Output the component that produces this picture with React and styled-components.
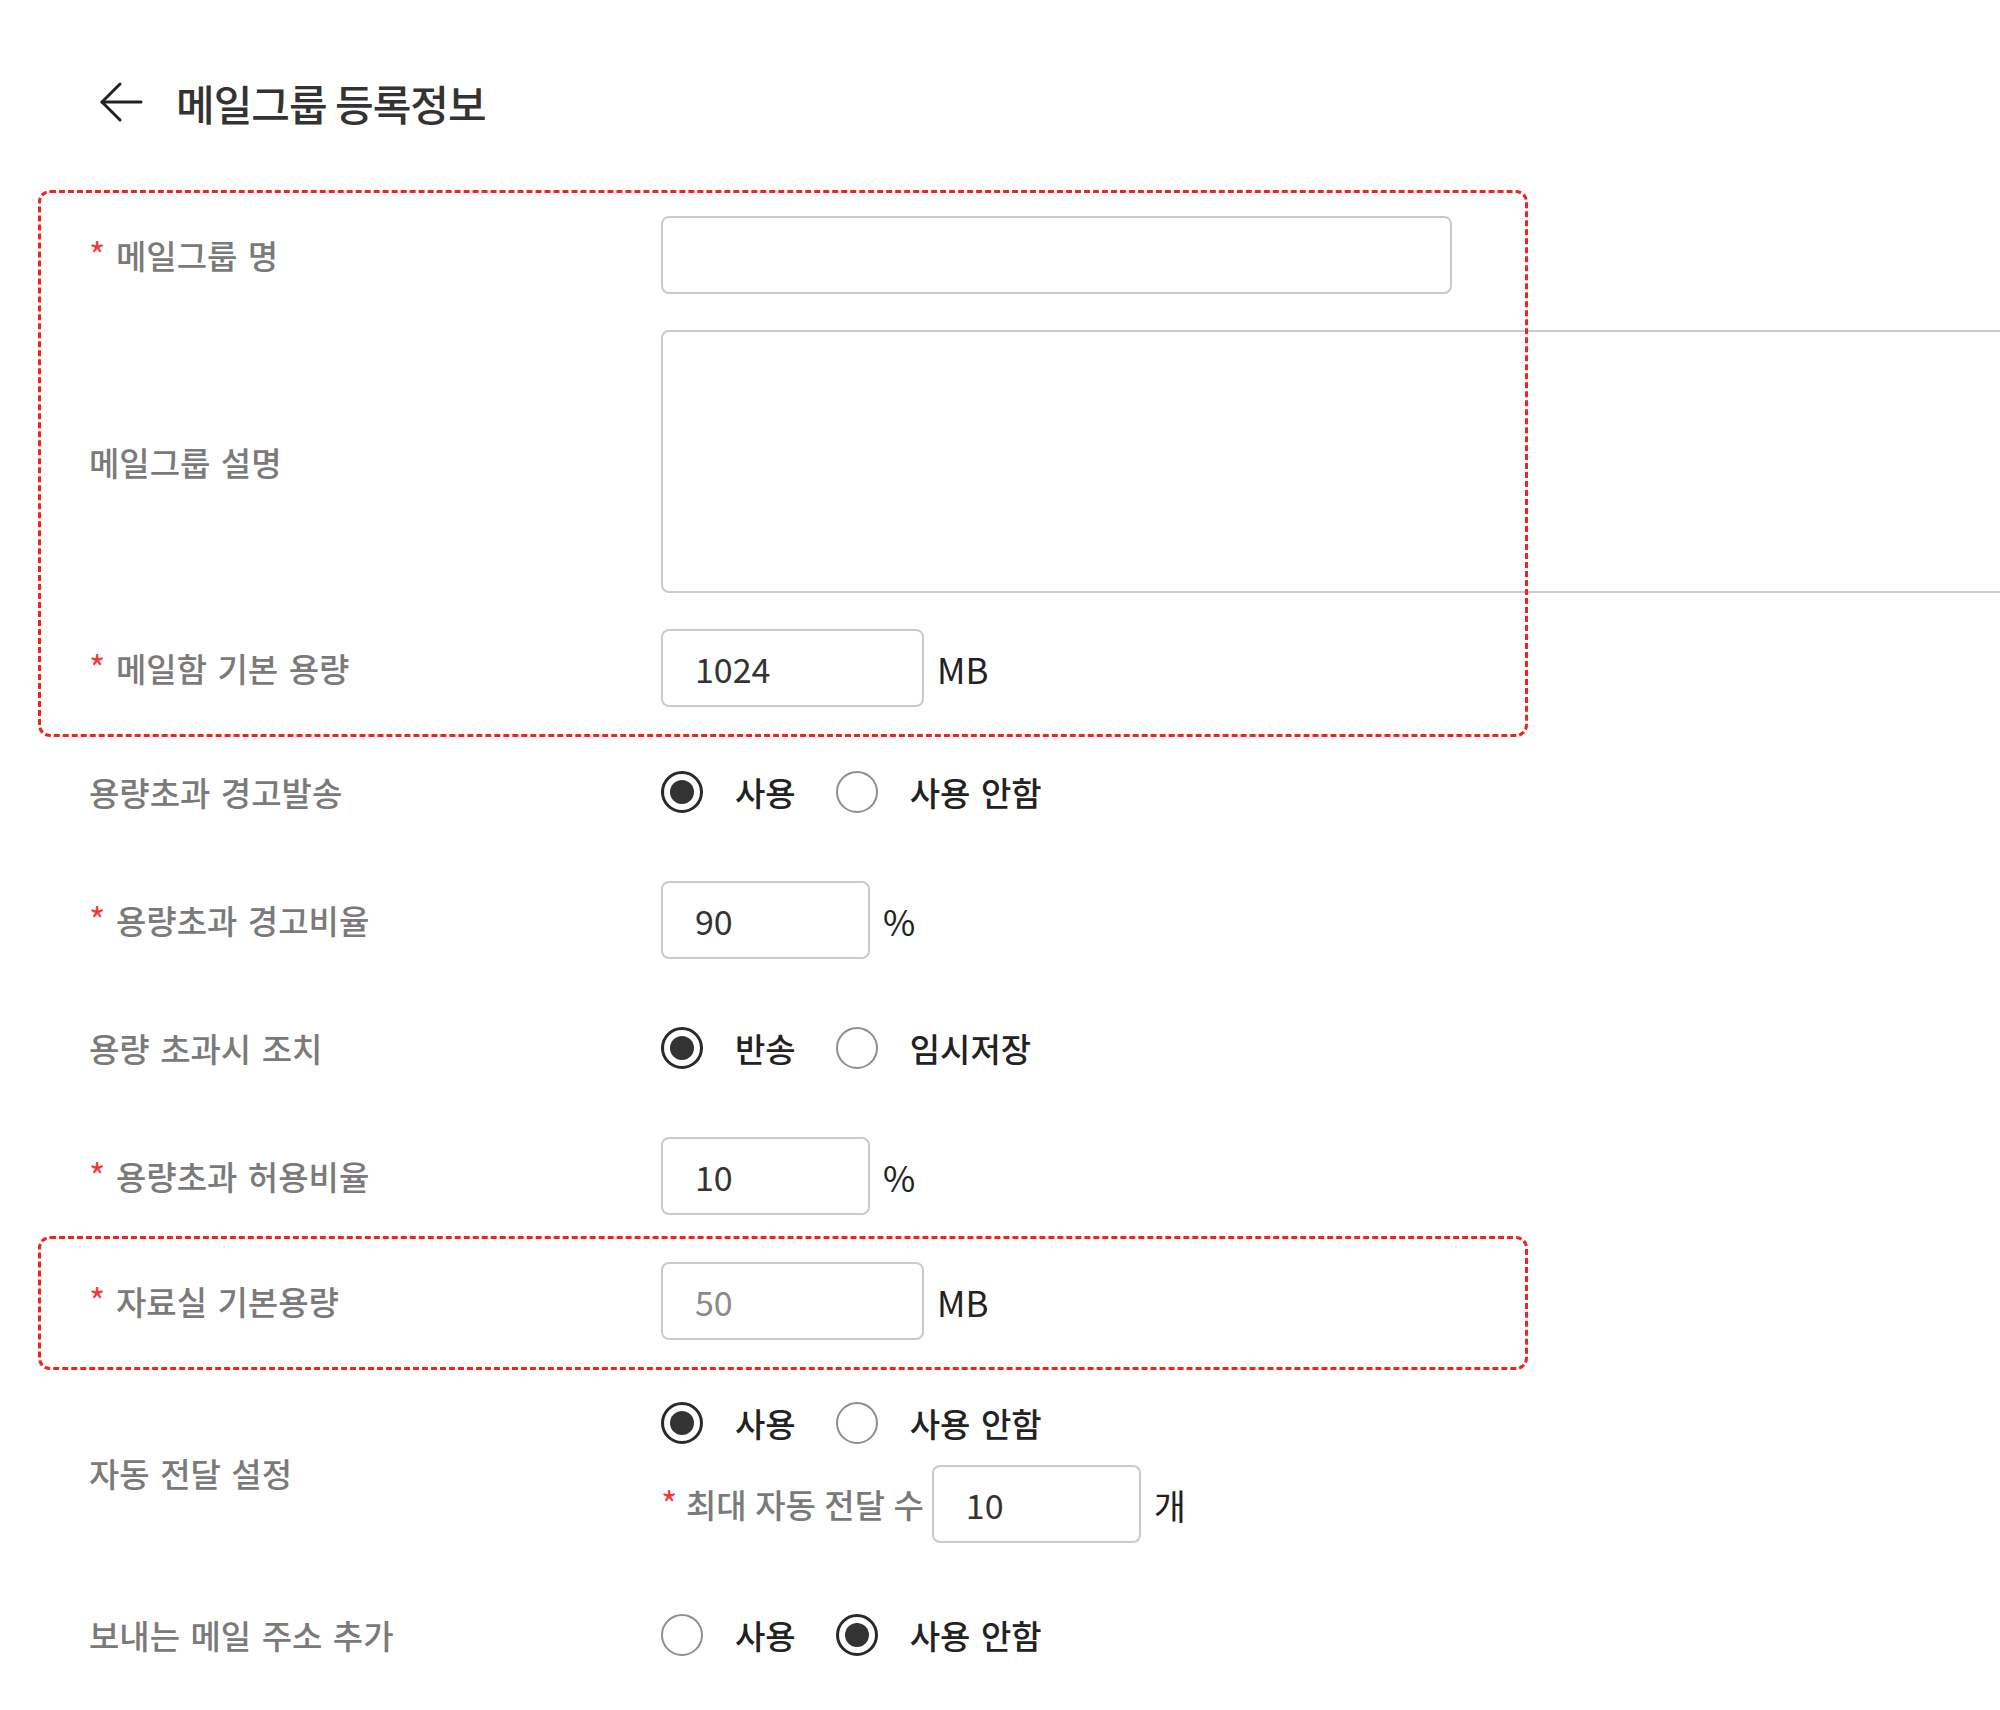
import React from 'react';
import styled, { createGlobalStyle } from 'styled-components';

const GlobalStyle = createGlobalStyle`
  * {
    box-sizing: border-box;
  }
  html,
  body {
    margin: 0;
    padding: 0;
    background: #fff;
    overflow: hidden;
  }
  body {
    font-family: 'Noto Sans CJK KR', 'Noto Sans', sans-serif;
    color: #222;
  }
`;

const Page = styled.div`
  width: 2000px;
  min-height: 1710px;
  padding: 64px 0 0 41px;
`;

const Header = styled.header`
  display: flex;
  align-items: center;
  height: 76px;
  padding-left: 58px;
  gap: 33px;
`;

const BackButton = styled.button`
  display: flex;
  padding: 0;
  border: 0;
  background: none;
  color: #222;
  cursor: pointer;
`;

const Title = styled.h1`
  margin: 0;
  font-size: 42px;
  font-weight: 500;
  letter-spacing: -1px;
  color: #333;
`;

const Form = styled.form`
  display: flex;
  flex-direction: column;
  width: 1487px;
`;

/* red dashed frame drawn over a group of rows */
const Highlight = styled.div`
  position: relative;
  display: flex;
  flex-direction: column;
  gap: 36px;
  width: 1490px;
  margin: ${p => p.$top}px 0 0 -3px;
  padding: 26px 0 30px 3px;

  &::after {
    content: '';
    position: absolute;
    inset: 0;
    border: 3px dashed #f2231f;
    border-radius: 12px;
    pointer-events: none;
  }
`;

const Row = styled.div`
  display: grid;
  grid-template-columns: 572px 1fr;
  align-items: center;
  min-height: 78px;
  padding-left: 48px;
  margin-top: ${p => p.$top || 0}px;
`;

const Label = styled.div`
  font-size: 33px;
  font-weight: 500;
  line-height: 40px;
  word-spacing: 3px;
  color: #7a7a7a;
  white-space: nowrap;
`;

const Star = styled.span`
  display: inline-block;
  width: 27px;
  font-size: 35px;
  font-weight: 400;
  line-height: 38px;
  vertical-align: top;
  color: #f03c3c;
`;

const Field = styled.div`
  display: flex;
  align-items: center;
`;

const TextInput = styled.input`
  width: ${p => p.$w}px;
  height: 78px;
  padding: 0 0 0 32px;
  border: 2px solid #cacaca;
  border-radius: 8px;
  background: #fff;
  font-family: inherit;
  font-size: 34px;
  color: ${p => (p.$muted ? '#8a8a8a' : '#333')};
  outline: none;
`;

const TextArea = styled.textarea`
  display: block;
  width: 1400px;
  height: 263px;
  border: 2px solid #cacaca;
  border-radius: 8px;
  background: transparent;
  resize: none;
  outline: none;
`;

const Unit = styled.span`
  margin-left: 13px;
  font-size: 35px;
  color: #222;
`;

const Options = styled.div`
  display: flex;
  align-items: center;
  gap: 40px;
`;

const Option = styled.label`
  display: flex;
  align-items: center;
  gap: 32px;
  font-size: 33px;
  font-weight: 500;
  line-height: 40px;
  word-spacing: 3px;
  color: #222;
  cursor: pointer;
`;

const Circle = styled.span`
  display: flex;
  align-items: center;
  justify-content: center;
  width: 42px;
  height: 42px;
  border-radius: 50%;
  border: ${p => (p.$on ? '3px solid #2a2a2a' : '2px solid #8e8e8e')};

  &::after {
    content: '';
    display: ${p => (p.$on ? 'block' : 'none')};
    width: 24px;
    height: 24px;
    border-radius: 50%;
    background: #333;
  }
`;

const Stack = styled.div`
  display: flex;
  flex-direction: column;
  align-items: flex-start;
  gap: 21px;
`;

const SubLabel = styled(Label)`
  margin-right: 8px;
  word-spacing: 1px;

  ${Star} {
    width: 25px;
  }
`;

const ArrowLeft = () => (
  <svg width="44" height="40" viewBox="0 0 44 40" fill="none" stroke="currentColor" strokeWidth="3" strokeLinecap="round" strokeLinejoin="round">
    <path d="M42 20H3" />
    <path d="M21 2L3 20l18 18" />
  </svg>
);

const RadioGroup = ({ items, value }) => (
  <Options>
    {items.map(item => (
      <Option key={item}>
        <Circle $on={item === value} />
        {item}
      </Option>
    ))}
  </Options>
);

const FieldLabel = ({ required, children }) => (
  <Label>
    {required && <Star>*</Star>}
    {children}
  </Label>
);

const useOptions = ['사용', '사용 안함'];

const App = () => {
  return (
    <Page>
      <GlobalStyle />
      <Header>
        <BackButton type="button" aria-label="뒤로">
          <ArrowLeft />
        </BackButton>
        <Title>메일그룹 등록정보</Title>
      </Header>

      <Form onSubmit={e => e.preventDefault()}>
        <Highlight $top={50}>
          <Row>
            <FieldLabel required>메일그룹 명</FieldLabel>
            <TextInput $w={791} />
          </Row>
          <Row>
            <FieldLabel>메일그룹 설명</FieldLabel>
            <TextArea />
          </Row>
          <Row>
            <FieldLabel required>메일함 기본 용량</FieldLabel>
            <Field>
              <TextInput $w={263} defaultValue="1024" />
              <Unit>MB</Unit>
            </Field>
          </Row>
        </Highlight>

        <Row $top={16}>
          <FieldLabel>용량초과 경고발송</FieldLabel>
          <RadioGroup items={useOptions} value="사용" />
        </Row>
        <Row $top={50}>
          <FieldLabel required>용량초과 경고비율</FieldLabel>
          <Field>
            <TextInput $w={209} defaultValue="90" />
            <Unit>%</Unit>
          </Field>
        </Row>
        <Row $top={50}>
          <FieldLabel>용량 초과시 조치</FieldLabel>
          <RadioGroup items={['반송', '임시저장']} value="반송" />
        </Row>
        <Row $top={50}>
          <FieldLabel required>용량초과 허용비율</FieldLabel>
          <Field>
            <TextInput $w={209} defaultValue="10" />
            <Unit>%</Unit>
          </Field>
        </Row>

        <Highlight $top={21}>
          <Row>
            <FieldLabel required>자료실 기본용량</FieldLabel>
            <Field>
              <TextInput $w={263} defaultValue="50" $muted readOnly />
              <Unit>MB</Unit>
            </Field>
          </Row>
        </Highlight>

        <Row $top={32}>
          <FieldLabel>자동 전달 설정</FieldLabel>
          <Stack>
            <RadioGroup items={useOptions} value="사용" />
            <Field>
              <SubLabel>
                <Star>*</Star>최대 자동 전달 수
              </SubLabel>
              <TextInput $w={209} defaultValue="10" />
              <Unit>개</Unit>
            </Field>
          </Stack>
        </Row>
        <Row $top={53}>
          <FieldLabel>보내는 메일 주소 추가</FieldLabel>
          <RadioGroup items={useOptions} value="사용 안함" />
        </Row>
      </Form>
    </Page>
  );
};

export default App;
